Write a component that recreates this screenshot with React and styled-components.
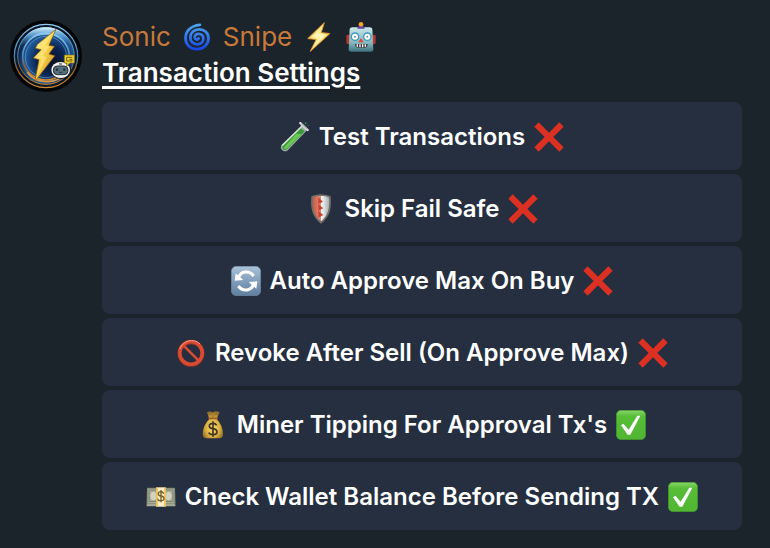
import React from "react";
import styled, { createGlobalStyle } from "styled-components";

const GlobalStyle = createGlobalStyle`
  * { box-sizing: border-box; }
  body {
    margin: 0;
    background: #1b232b;
    color: #ffffff;
    font-family: Inter, "Liberation Sans", sans-serif;
  }
`;

const Message = styled.article`
  display: flex;
  align-items: flex-start;
  gap: 20px;
  padding: 19px 28px 18px 10px;
`;

const Avatar = styled.svg`
  flex: none;
  display: block;
  width: 72px;
  height: 72px;
  margin-top: 1px;
`;

const Content = styled.div`
  flex: 1;
  min-width: 0;
`;

const Sender = styled.header`
  display: flex;
  align-items: center;
  gap: 12px;
  height: 36px;
  color: #c8793a;
  font-size: 26px;
  line-height: 36px;
`;

const Title = styled.h1`
  margin: 0 0 11px;
  font-size: 26px;
  font-weight: 600;
  line-height: 36px;
  text-decoration: underline;
  text-decoration-thickness: 3px;
  text-underline-offset: 4px;
`;

const Keyboard = styled.div`
  display: grid;
  gap: 4px;
`;

const OptionButton = styled.button`
  display: flex;
  align-items: center;
  justify-content: center;
  gap: 9px;
  min-height: 68px;
  padding: 6px 12px 4px;
  border: 0;
  border-radius: 8px;
  background: #252f3f;
  color: inherit;
  font-family: inherit;
  font-size: 24px;
  font-weight: 600;
  line-height: 32px;
  cursor: pointer;
`;

const Glyph = styled.svg`
  flex: none;
  display: block;
  width: ${(p) => p.$size || 30}px;
  height: ${(p) => p.$size || 30}px;
`;

function BotAvatar() {
  return (
    <Avatar viewBox="0 0 216 216" role="img" aria-label="Sonic Snipe">
      <defs>
        <linearGradient id="ring" x1="0" y1="0" x2="0" y2="1">
          <stop offset="0" stopColor="#8fcaf2" />
          <stop offset=".5" stopColor="#4682b8" />
          <stop offset=".72" stopColor="#94602a" />
          <stop offset="1" stopColor="#d08a32" />
        </linearGradient>
        <radialGradient id="orb" cx=".58" cy=".58" r=".56">
          <stop offset="0" stopColor="#050f28" />
          <stop offset=".45" stopColor="#0b2552" />
          <stop offset=".8" stopColor="#1f5c9c" />
          <stop offset="1" stopColor="#0f2a4c" />
        </radialGradient>
        <linearGradient id="shine" x1="0" y1="0" x2="0" y2="1">
          <stop offset="0" stopColor="#d8f3ff" />
          <stop offset=".45" stopColor="#5fb0ea" stopOpacity=".7" />
          <stop offset="1" stopColor="#245080" stopOpacity="0" />
        </linearGradient>
        <linearGradient id="gold" x1="0" y1="0" x2="1" y2="1">
          <stop offset="0" stopColor="#fff5a3" />
          <stop offset=".5" stopColor="#f7cf48" />
          <stop offset="1" stopColor="#b77716" />
        </linearGradient>
      </defs>
      <circle cx="108" cy="108" r="108" fill="#050608" />
      <circle cx="108" cy="108" r="95" fill="#0c1828" stroke="url(#ring)" strokeWidth="4" />
      <circle cx="108" cy="108" r="85" fill="url(#orb)" stroke="url(#ring)" strokeWidth="3" />
      <path d="M29 86C38 46 68 22 108 22s70 24 79 64c-22-30-44-41-79-41S53 56 29 86Z" fill="url(#shine)" />
      <circle cx="108" cy="110" r="70" fill="none" stroke="url(#ring)" strokeWidth="5" />
      <circle cx="108" cy="111" r="62" fill="none" stroke="#8bbde6" strokeOpacity=".45" strokeWidth="3" />
      <path d="M52 157c24 35 86 39 116 2" fill="none" stroke="#d79a48" strokeWidth="5" />
      <path d="M138 28 82 73l-6 12 17 4-23 25 17 5-13 66 61-78-18-5 17-23-17-3Z" fill="url(#gold)" stroke="#7a4c10" strokeWidth="2" />
      <path d="m136 32-50 44-4 7 20 4-22 26 15 4-14 50 30-56-13-4 20-27-14-4Z" fill="#ffec8a" opacity=".55" />
      <ellipse cx="152" cy="149" rx="31" ry="28" fill="#171b20" />
      <ellipse cx="152" cy="150" rx="28" ry="24" fill="#f0f2f2" />
      <rect x="130" y="138" width="44" height="26" rx="12" fill="#53707c" stroke="#252e34" strokeWidth="3" />
      <circle cx="141" cy="149" r="4" fill="#26353d" />
      <circle cx="163" cy="149" r="4" fill="#26353d" />
      <path d="M147 156q5 4 10 0M147 132h9" fill="none" stroke="#252e34" strokeWidth="3" />
      <path d="M163 105h30v24h-13l-10 9v-9h-7Z" fill="#eed331" stroke="#7c6a16" strokeWidth="2" />
      <path d="M187 112h-17v11h16v-5h-8" fill="none" stroke="#75600d" strokeWidth="3" />
    </Avatar>
  );
}

function Cyclone() {
  return (
    <Glyph $size={28} viewBox="0 0 84 88" aria-hidden="true">
      <defs>
        <linearGradient id="cyclone" x1="0" y1="0" x2="0" y2="1">
          <stop stopColor="#4aa5ef" /><stop offset="1" stopColor="#1847e4" />
        </linearGradient>
      </defs>
      <path
        d="M51 6C20 9 6 28 6 48c0 21 16 34 36 34 21 0 36-15 36-34 0-17-13-28-29-28-17 0-28 11-28 26 0 12 10 21 22 21 11 0 19-8 19-18 0-9-7-15-15-15s-13 5-12 12c1 6 9 8 12 3"
        fill="none"
        stroke="url(#cyclone)"
        strokeWidth="9"
        strokeLinecap="round"
      />
    </Glyph>
  );
}

function Bolt() {
  return (
    <Glyph viewBox="0 0 90 96" aria-hidden="true">
      <defs>
        <linearGradient id="bolt" x1="0" y1="0" x2="1" y2="1">
          <stop stopColor="#f5a529" /><stop offset=".5" stopColor="#fff2a0" /><stop offset="1" stopColor="#f2a42b" />
        </linearGradient>
      </defs>
      <path d="M62 2 9 53l27 3-19 38 63-57-28-3Z" fill="url(#bolt)" stroke="#e99727" strokeWidth="3" strokeLinejoin="round" />
      <path d="M51 19 22 48l25 3-17 25 37-35-25-3Z" fill="#fff6b5" />
    </Glyph>
  );
}

function Robot() {
  return (
    <Glyph viewBox="0 0 90 90" aria-hidden="true">
      <defs>
        <linearGradient id="robot" x1="0" y1="0" x2="0" y2="1">
          <stop stopColor="#c9e8ec" /><stop offset=".65" stopColor="#83b5bd" /><stop offset="1" stopColor="#3d727d" />
        </linearGradient>
      </defs>
      <rect x="1" y="38" width="10" height="28" rx="4" fill="#b9352d" />
      <rect x="79" y="38" width="10" height="28" rx="4" fill="#b9352d" />
      <path d="M11 21q1-5 8-5h52q7 0 8 5l3 62q0 6-8 6H16q-8 0-8-6Z" fill="url(#robot)" />
      <path d="M34 20q1-10 11-10t11 10Z" fill="#653ea2" />
      <circle cx="45" cy="7" r="7" fill="#f3a623" />
      <circle cx="27" cy="44" r="13" fill="#3f98bd" /><circle cx="64" cy="44" r="13" fill="#3f98bd" />
      <circle cx="27" cy="44" r="9" fill="#fff" /><circle cx="64" cy="44" r="9" fill="#fff" />
      <circle cx="27" cy="44" r="3" fill="#619dad" /><circle cx="64" cy="44" r="3" fill="#619dad" />
      <path d="m45 48-8 13h16Z" fill="#df4a32" />
      <path d="M27 66h38q0 11-10 11H37q-10 0-10-11Z" fill="#413a42" />
      <path d="M34 67v7m8-7v9m8-9v9m8-9v7" stroke="#fff" strokeWidth="4" />
    </Glyph>
  );
}

function TestTube() {
  return (
    <Glyph viewBox="0 0 90 90" aria-hidden="true">
      <path d="m62 4 20 19-6 7L22 86q-10 4-16-2-6-7-2-15L63 13Z" fill="#9eaaa7" />
      <path d="m60 17 14 11-53 54q-7 4-12 0-5-6 0-13L43 35Z" fill="#389b35" />
      <path d="m49 35 16 2-45 43q-7 2-9-2Z" fill="#68c853" />
      <path d="M8 70 64 14" stroke="#d7e6da" strokeWidth="4" strokeLinecap="round" />
      <path d="m61 3 22 21" stroke="#e5e7e8" strokeWidth="7" strokeLinecap="round" />
      <path d="m63 4 19 18" stroke="#727b7c" strokeWidth="2" />
      <circle cx="77" cy="4" r="3" fill="#31844b" /><circle cx="84" cy="10" r="2" fill="#31844b" />
    </Glyph>
  );
}

function Shield() {
  return (
    <Glyph viewBox="0 0 90 90" aria-hidden="true">
      <defs>
        <linearGradient id="shield" x1="0" x2="1">
          <stop stopColor="#c45c47" /><stop offset=".48" stopColor="#f08770" /><stop offset=".49" stopColor="#fff" /><stop offset="1" stopColor="#a4afb2" />
        </linearGradient>
      </defs>
      <path d="M45 1C34 2 24 3 16 7c-3 34 1 62 29 82C73 69 77 41 74 7 66 3 56 2 45 1Z" fill="#73706c" />
      <path d="M45 6c-9 0-17 1-24 5-2 29 2 53 24 71 22-18 26-42 24-71-7-4-15-5-24-5Z" fill="url(#shield)" />
      <path d="m37 10 14 13-14 7 15 13-15 7 15 13-15 8V10Z" fill="#c94331" />
    </Glyph>
  );
}

function Refresh() {
  return (
    <Glyph viewBox="0 0 90 90" aria-hidden="true">
      <defs>
        <linearGradient id="refresh" x1="0" y1="0" x2="0" y2="1">
          <stop stopColor="#abc3d9" /><stop offset=".5" stopColor="#819ebc" /><stop offset="1" stopColor="#607f9e" />
        </linearGradient>
      </defs>
      <rect x="1" y="1" width="88" height="88" rx="15" fill="url(#refresh)" stroke="#6f8aa4" strokeWidth="2" />
      <path d="M22 38C27 15 54 11 68 30" fill="none" stroke="#fff" strokeWidth="9" />
      <path d="m11 44 3-22 23 20Z" fill="#fff" />
      <path d="M68 52C63 75 36 79 22 60" fill="none" stroke="#fff" strokeWidth="9" />
      <path d="m79 46-3 22-23-20Z" fill="#fff" />
    </Glyph>
  );
}

function Forbidden() {
  return (
    <Glyph viewBox="0 0 90 90" aria-hidden="true">
      <circle cx="45" cy="46" r="34" fill="none" stroke="#9e3226" strokeWidth="13" />
      <circle cx="45" cy="45" r="34" fill="none" stroke="#d84b32" strokeWidth="10" />
      <path d="m22 22 46 46" stroke="#d84b32" strokeWidth="8" />
      <path d="M12 33C20 8 53-1 72 18" fill="none" stroke="#f3a18b" strokeWidth="3" />
    </Glyph>
  );
}

function MoneyBag() {
  return (
    <Glyph viewBox="0 0 90 90" aria-hidden="true">
      <defs>
        <radialGradient id="bag" cx=".5" cy=".6" r=".55">
          <stop stopColor="#ffdc72" /><stop offset=".65" stopColor="#d9ad3e" /><stop offset="1" stopColor="#94702b" />
        </radialGradient>
      </defs>
      <path d="M27 7q9-5 17 0 9-6 21 0l-9 20q19 20 19 45 0 13-11 13H26q-12 0-12-13 0-25 20-45Z" fill="url(#bag)" />
      <path d="M33 25h25" stroke="#9e5c2c" strokeWidth="5" strokeLinecap="round" />
      <path d="m39 9 5 14 8-13" fill="none" stroke="#a77b2c" strokeWidth="3" />
      <path d="M56 46q-3-6-11-6-11 0-11 8 0 7 11 8 12 2 12 10 0 8-12 8-10 0-13-6M45 34v46" fill="none" stroke="#403523" strokeWidth="5" />
    </Glyph>
  );
}

function Cash() {
  return (
    <Glyph viewBox="0 0 90 90" aria-hidden="true">
      <path d="M3 17h84l2 56H1Z" fill="#737b68" />
      <path d="M5 20h80v44H5Z" fill="#b5b8a1" />
      <rect x="9" y="24" width="72" height="35" fill="none" stroke="#737b68" strokeWidth="3" />
      <ellipse cx="22" cy="42" rx="11" ry="15" fill="#d3d2c0" stroke="#7e856f" strokeWidth="2" />
      <ellipse cx="68" cy="42" rx="11" ry="15" fill="#d3d2c0" stroke="#7e856f" strokeWidth="2" />
      <path d="M4 67h82M3 71h84" stroke="#d1cfb6" strokeWidth="2" />
      <path d="M31 16h28v58H31Z" fill="#f5edcd" />
      <path d="M33 16v58M57 16v58" stroke="#edba29" strokeWidth="4" />
      <path d="M53 35q-2-6-8-6-8 0-8 6t8 7 9 7-9 7-9-6M45 24v37" fill="none" stroke="#715c27" strokeWidth="4" />
    </Glyph>
  );
}

function Cross() {
  return (
    <Glyph viewBox="0 0 90 90" role="img" aria-label="off">
      <path d="M14 1 45 32 76 1l13 13-31 31 31 31-13 13-31-31-31 31L1 76l31-31L1 14Z" fill="#dc3023" />
    </Glyph>
  );
}

function Check() {
  return (
    <Glyph viewBox="0 0 90 90" role="img" aria-label="on">
      <defs>
        <linearGradient id="check" x1="0" y1="0" x2="0" y2="1">
          <stop stopColor="#8bd66b" /><stop offset=".2" stopColor="#57be38" /><stop offset="1" stopColor="#51b532" />
        </linearGradient>
      </defs>
      <rect x="1" y="1" width="88" height="88" rx="14" fill="url(#check)" stroke="#3c962a" strokeWidth="2" />
      <path d="M64 17h9L43 74h-8L15 46l7-5 16 18Z" fill="#fff" />
    </Glyph>
  );
}

const options = [
  { label: "Test Transactions", Icon: TestTube, on: false },
  { label: "Skip Fail Safe", Icon: Shield, on: false },
  { label: "Auto Approve Max On Buy", Icon: Refresh, on: false },
  { label: "Revoke After Sell (On Approve Max)", Icon: Forbidden, on: false },
  { label: "Miner Tipping For Approval Tx's", Icon: MoneyBag, on: true },
  { label: "Check Wallet Balance Before Sending TX", Icon: Cash, on: true },
];

export default function App() {
  return (
    <>
      <GlobalStyle />
      <Message>
        <BotAvatar />
        <Content>
          <Sender>
            <span>Sonic</span>
            <Cyclone />
            <span>Snipe</span>
            <Bolt />
            <Robot />
          </Sender>
          <Title>Transaction Settings</Title>
          <Keyboard>
            {options.map(({ label, Icon, on }) => (
              <OptionButton key={label} type="button">
                <Icon />
                <span>{label}</span>
                {on ? <Check /> : <Cross />}
              </OptionButton>
            ))}
          </Keyboard>
        </Content>
      </Message>
    </>
  );
}
